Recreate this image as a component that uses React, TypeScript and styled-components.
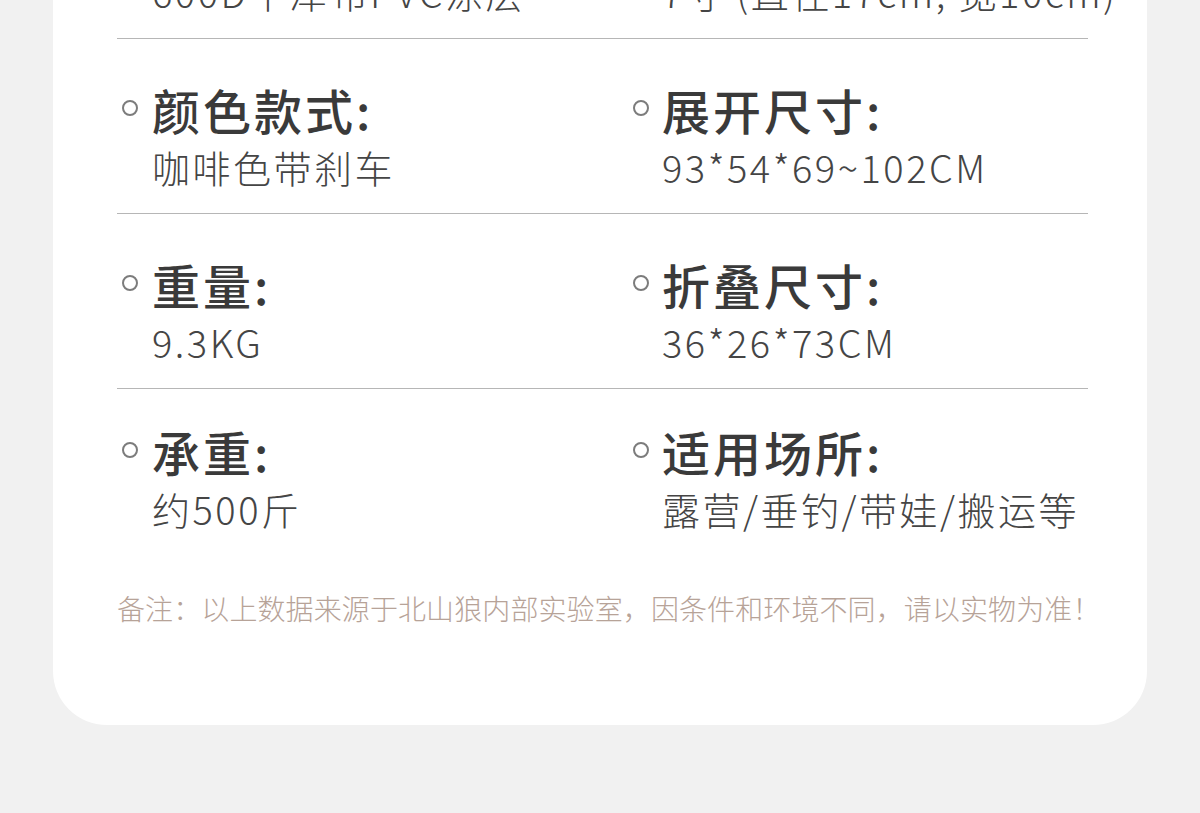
import React from 'react';
import styled, { createGlobalStyle } from 'styled-components';

const GlobalStyle = createGlobalStyle`
  html, body {
    margin: 0;
    padding: 0;
    background: #f1f1f1;
  }
  body {
    font-family: 'Noto Sans CJK SC', 'Noto Sans', sans-serif;
    overflow: hidden;
  }
`;

// the page is scrolled: the top of the spec card lies above the window
const Page = styled.div`
  margin-top: -136px;
  padding: 0 53px 88px;
`;

const Card = styled.section`
  background: #ffffff;
  border-radius: 0 0 54px 54px;
  padding: 0 59px 100px 64px;
`;

const SpecRow = styled.div`
  display: grid;
  grid-template-columns: 513px 1fr;
  padding: 42px 0 23px;
  border-bottom: 1px solid #b6b6b6;

  &:last-of-type {
    border-bottom: none;
    padding: 34px 0 0;
  }
`;

const SpecCell = styled.div<{ $col: 'left' | 'right' }>`
  display: grid;
  grid-template-columns: 16px 1fr;
  column-gap: ${({ $col }) => ($col === 'left' ? 14 : 13)}px;
  padding-left: ${({ $col }) => ($col === 'left' ? 5 : 3)}px;
  align-items: center;
`;

const Bullet = styled.span`
  width: 16px;
  height: 16px;
  box-sizing: border-box;
  border: 2px solid #7c7c7c;
  border-radius: 50%;
  margin-top: -3px;
`;

const Label = styled.div`
  font-size: 48px;
  font-weight: 500;
  line-height: 57px;
  letter-spacing: 3px;
  color: #3a3a3a;
`;

const Value = styled.div`
  grid-column: 2;
  margin-top: 6px;
  font-size: 38px;
  font-weight: 300;
  line-height: 46px;
  letter-spacing: 2.5px;
  color: #454545;
  white-space: nowrap;
`;

const Note = styled.p`
  margin: 59px 0 0;
  font-size: 28px;
  font-weight: 300;
  line-height: 34px;
  letter-spacing: 0.1px;
  text-align: center;
  color: #b7a398;
  white-space: nowrap;
`;

type Spec = { label: string; value: string };

const ROWS: [Spec, Spec][] = [
  [
    { label: '面料材质:', value: '600D牛津布PVC涂层' },
    { label: '轮子尺寸:', value: '7寸 (直径17cm, 宽10cm)' },
  ],
  [
    { label: '颜色款式:', value: '咖啡色带刹车' },
    { label: '展开尺寸:', value: '93*54*69~102CM' },
  ],
  [
    { label: '重量:', value: '9.3KG' },
    { label: '折叠尺寸:', value: '36*26*73CM' },
  ],
  [
    { label: '承重:', value: '约500斤' },
    { label: '适用场所:', value: '露营/垂钓/带娃/搬运等' },
  ],
];

function SpecItem({ spec, col }: { spec: Spec; col: 'left' | 'right' }) {
  return (
    <SpecCell $col={col}>
      <Bullet />
      <Label>{spec.label}</Label>
      <Value>{spec.value}</Value>
    </SpecCell>
  );
}

export default function App() {
  return (
    <>
      <GlobalStyle />
      <Page>
        <Card>
          {ROWS.map(([a, b]) => (
            <SpecRow key={a.label}>
              <SpecItem spec={a} col="left" />
              <SpecItem spec={b} col="right" />
            </SpecRow>
          ))}
          <Note>备注：以上数据来源于北山狼内部实验室，因条件和环境不同，请以实物为准！</Note>
        </Card>
      </Page>
    </>
  );
}
